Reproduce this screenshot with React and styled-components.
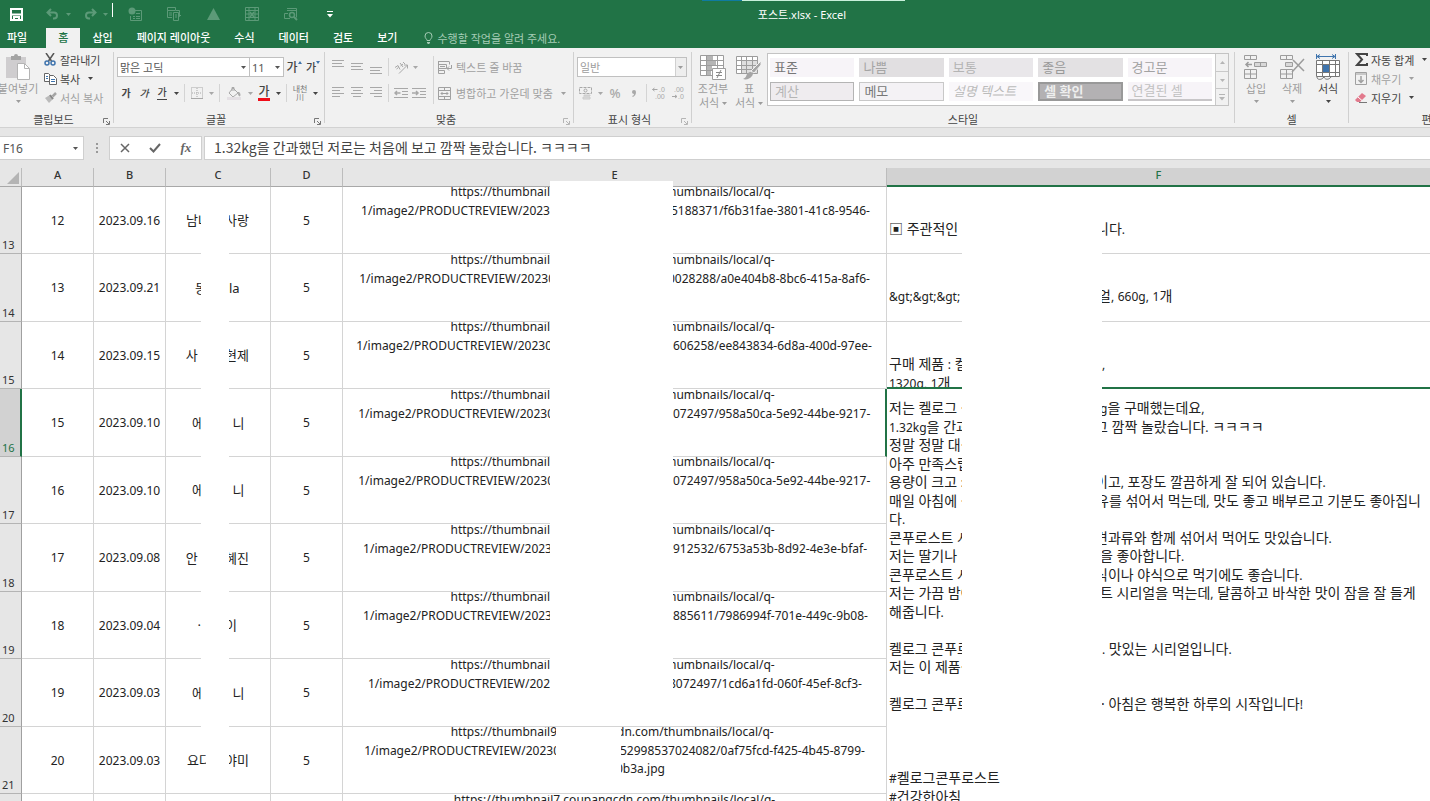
import React, { useState } from "react";
import styled, { createGlobalStyle, css } from "styled-components";

const GlobalStyle = createGlobalStyle`
  * {
    box-sizing: border-box;
  }
  body {
    margin: 0;
    background: #fff;
  }
  svg {
    flex: none;
  }
  button, input, select {
    font: inherit;
    color: inherit;
    margin: 0;
    padding: 0;
    border: none;
    background: none;
    border-radius: 0;
    outline: none;
  }
`;

const green = "#217346";

const Page = styled.div`
  height: 100vh;
  display: flex;
  flex-direction: column;
  overflow: hidden;
  font-family: "Noto Sans", "Noto Sans CJK KR", sans-serif;
  font-size: 11px;
  color: #444;
`;

/* ---------- title bar ---------- */
const TitleBar = styled.header`
  position: relative;
  height: 28px;
  flex: none;
  display: flex;
  align-items: center;
  background: ${green};
  color: #fff;
`;
const Strip = styled.div`
  position: absolute;
  top: 0;
  left: 702px;
  width: 203px;
  height: 1px;
  background: linear-gradient(90deg, #0f7ba0 40px, #c9f0dc 40px);
`;
const QuickAccess = styled.div`
  width: 340px;
  flex: none;
  height: 26px;
  display: flex;
  align-items: center;
  padding-left: 3px;
`;
const QuickGroup = styled.div`
  flex: none;
  display: flex;
  align-items: center;
  gap: ${(props) => props.$gap || 0}px;
  margin-left: ${(props) => props.$before}px;
`;
const QuickButton = styled.button`
  width: ${(props) => props.$width || 20}px;
  flex: none;
  height: 24px;
  display: flex;
  align-items: center;
  justify-content: center;
  color: ${(props) => (props.$on ? "#fff" : "#5c9a78")};
`;
const QuickLine = styled.span`
  width: 1px;
  flex: none;
  height: 14px;
  margin-left: 3px;
  margin-bottom: 8px;
  background: #fff;
`;
const DocTitle = styled.h1`
  flex: 1;
  margin: 0;
  padding-right: 166px;
  text-align: center;
  font-size: 11px;
  font-weight: 400;
`;

/* ---------- tabs ---------- */
const Tabs = styled.nav`
  height: 20px;
  flex: none;
  display: flex;
  background: ${green};
`;
const Tab = styled.button`
  padding: 0 12px;
  color: #fff;
  font-weight: 500;
  line-height: 20px;
  white-space: nowrap;
  ${(props) =>
    props.$file &&
    css`
      padding: 0 19px 0 7px;
    `}
  ${(props) =>
    props.$active &&
    css`
      background: #f1f1f1;
      color: ${green};
    `}
`;
const TellMe = styled.button`
  display: flex;
  align-items: center;
  gap: 4px;
  padding-left: 15px;
  color: #a6cdb6;
  white-space: nowrap;
`;

/* ---------- ribbon ---------- */
const Ribbon = styled.section`
  height: 80px;
  flex: none;
  display: flex;
  background: #f1f1f1;
  border-bottom: 1px solid #d2d2d2;
  overflow: hidden;
`;
const Group = styled.div`
  position: relative;
  flex: none;
  width: ${(props) => props.$width}px;
  display: flex;
  flex-direction: column;
  &::after {
    content: "";
    position: absolute;
    right: 0;
    top: 4px;
    bottom: 4px;
    width: 1px;
    background: #d0d0d0;
  }
`;
const GroupBody = styled.div`
  height: 62px;
  display: flex;
  padding-left: ${(props) => (props.$flush ? 0 : 3)}px;
`;
const GroupFooter = styled.div`
  height: 17px;
  display: flex;
  align-items: center;
  padding-right: 1px;
  span {
    flex: 1;
    text-align: center;
    padding-left: ${(props) => (props.$launcher ? 4 : 0)}px;
  }
`;
const Launcher = styled.button`
  width: 10px;
  height: 12px;
  display: flex;
  align-items: flex-end;
  color: ${(props) => (props.$dim ? "#b5b5b5" : "#777")};
`;
const Stack = styled.div`
  flex: none;
  display: flex;
  flex-direction: column;
  padding-top: ${(props) => (props.$small ? 2 : 6)}px;
  padding-left: ${(props) => props.$indent || 0}px;
  width: ${(props) => (props.$width ? `${props.$width}px` : "auto")};
`;
const ToolRow = styled.div`
  display: flex;
  align-items: center;
  height: 26px;
`;
const ToolButton = styled.button`
  width: ${(props) => props.$width || 18}px;
  height: 22px;
  display: flex;
  align-items: center;
  justify-content: center;
  color: ${(props) => (props.$dim ? "#a8a8a8" : "#444")};
`;
const Glyph = styled.span`
  font-size: ${(props) => props.$size || 11}px;
  font-weight: ${(props) => (props.$bold ? 700 : 500)};
  font-style: ${(props) => (props.$italic ? "italic" : "normal")};
  line-height: 13px;
  border-bottom: ${(props) => props.$line || "none"};
`;
const RubyMark = styled.span`
  font-size: 8px;
  line-height: 8px;
  text-align: center;
  color: #777;
`;
const LabelButton = styled.button`
  display: flex;
  align-items: center;
  gap: 4px;
  height: ${(props) => (props.$tall ? 26 : 19)}px;
  white-space: nowrap;
  color: ${(props) => (props.$dim ? "#a0a0a0" : "#444")};
  & > svg:last-child {
    margin-left: 4px;
  }
`;
const IconSlot = styled.span`
  width: ${(props) => props.$width || 12}px;
  display: flex;
  justify-content: center;
`;
const BigButton = styled.button`
  width: 36px;
  flex: none;
  display: flex;
  flex-direction: column;
  align-items: center;
  padding-top: 6px;
  line-height: 14px;
  white-space: nowrap;
  color: ${(props) => (props.$dim ? "#9c9c9c" : "#444")};
  & > svg:first-child {
    margin-bottom: 2px;
  }
  & > svg:last-child {
    margin-top: 4px;
  }
`;
const BigLabel = styled.span`
  display: flex;
  align-items: center;
  gap: 3px;
  height: 14px;
`;
const Divider = styled.span`
  width: 1px;
  flex: none;
  height: ${(props) => (props.$tall ? 48 : 18)}px;
  margin: ${(props) => (props.$tall ? "8px 4px 0 1px" : "0 3px")};
  background: #d4d4d4;
`;
const Picker = styled.label`
  position: relative;
  flex: none;
  width: ${(props) => props.$width}px;
  height: 20px;
  border: 1px solid #c0c0c0;
  border-left-width: ${(props) => (props.$joined ? 0 : 1)}px;
  background: #fff;
  color: ${(props) => (props.$dim ? "#9c9c9c" : "#555")};
  select {
    display: block;
    appearance: none;
    width: 100%;
    height: 18px;
    padding-left: 2px;
  }
  svg {
    position: absolute;
    right: 3px;
    top: 8px;
    pointer-events: none;
  }
  ${(props) =>
    props.$dim &&
    css`
      background: linear-gradient(270deg, #eee 10px, #d0d0d0 10px, #d0d0d0 11px, #fff 11px);
    `}
`;

/* ---------- style gallery ---------- */
const Gallery = styled.div`
  flex: 1;
  height: 53px;
  margin: 5px 6px 0 0;
  display: flex;
  border: 1px solid #c3c3c3;
  background: #fff;
`;
const GalleryGrid = styled.div`
  flex: 1;
  display: grid;
  grid-template-columns: repeat(5, 1fr);
  grid-auto-rows: 19px;
  gap: 5px;
  padding: 4px 3px 4px 2px;
`;
const looks = {
  plain: "background: #f7f4f8; color: #777;",
  shade: "background: #e1dfe1; color: #a5a5a5;",
  soft: "background: #e9e7ea; color: #b4b4b4;",
  good: "background: #e3e1e3; color: #999;",
  warn: "background: #f7f4f8; color: #a2a2a2;",
  calc: "background: #efecef; color: #b5b5b5; border: 1px solid #b4b4b4;",
  memo: "background: #f4f2f5; color: #777; border: 1px solid #c8c8c8;",
  note: "background: #f9f7fa; color: #bbb; font-style: italic;",
  check:
    "background: #b3b1b3; color: #eee; border: 2px solid #999; font-weight: 700;",
  link: "background: #f7f4f8; color: #c2c2c2; border-bottom: 2px solid #c8c6c8;",
};
const StyleButton = styled.button`
  && {
    display: flex;
    align-items: center;
    padding-left: 4px;
    font-size: 13px;
    line-height: 15px;
    white-space: nowrap;
    ${(props) => looks[props.$look]}
  }
`;
const GalleryScroll = styled.div`
  width: 13px;
  display: grid;
  grid-template-rows: repeat(3, 1fr);
  background: #f1f1f1;
  border-left: 1px solid #c9c9c9;
  button {
    display: flex;
    align-items: center;
    justify-content: center;
    color: #b5b5b5;
  }
  button + button {
    border-top: 1px solid #c9c9c9;
  }
`;

/* ---------- formula bar ---------- */
const FormulaBar = styled.div`
  height: 40px;
  flex: none;
  display: flex;
  padding: 8px 0;
  background: #e6e6e6;
  color: #555;
`;
const NameBox = styled.label`
  width: 84px;
  display: flex;
  align-items: center;
  justify-content: space-between;
  padding: 0 5px 0 3px;
  background: #fff;
  border: 1px solid #cfcfcf;
  border-left: none;
  input {
    width: 60px;
    font-size: 12px;
  }
`;
const Grip = styled.span`
  width: 25px;
  display: flex;
  align-items: center;
  justify-content: center;
  color: #999;
`;
const FormulaActions = styled.div`
  width: 93px;
  display: flex;
  align-items: center;
  background: #fff;
  border: 1px solid #cfcfcf;
  button {
    flex: 1;
    display: flex;
    justify-content: center;
    color: #666;
  }
`;
const FunctionMark = styled.i`
  font-family: "Liberation Serif", serif;
  font-weight: 700;
  font-size: 13px;
  line-height: 16px;
`;
const FormulaInput = styled.input`
  && {
    flex: 1;
    margin-left: 2px;
    padding: 0 0 2px 9px;
    background: #fff;
    border: 1px solid #cfcfcf;
    border-right: none;
    font-size: 14px;
    font-family: "Noto Sans CJK KR", sans-serif;
    color: #444;
  }
`;

/* ---------- sheet ---------- */
const Sheet = styled.main`
  position: relative;
  flex: 1;
  min-height: 0;
  overflow: hidden;
  background: #fff;
`;
const Grid = styled.table`
  width: 100%;
  table-layout: fixed;
  border-collapse: separate;
  border-spacing: 0;
  font-size: 12px;
  color: #222;
`;
const Col = styled.col`
  width: ${(props) => (props.$width ? `${props.$width}px` : "auto")};
`;
const ColHead = styled.th`
  height: 19px;
  padding: 0;
  font-size: 11px;
  font-weight: 500;
  line-height: 14px;
  vertical-align: top;
  background: ${(props) => (props.$selected ? "#d2d2d2" : "#e6e6e6")};
  color: ${(props) => (props.$selected ? green : "#333")};
  border-right: ${(props) => (props.$selected ? "none" : "1px solid #bcbcbc")};
  border-bottom: ${(props) =>
    props.$selected ? `2px solid ${green}` : "1px solid #a8a8a8"};
  svg {
    display: block;
    margin: 4px 0 0 7px;
  }
`;
const RowHead = styled.th`
  padding: 0 0 0 2px;
  text-align: left;
  vertical-align: bottom;
  font-size: 11px;
  font-weight: 400;
  line-height: 16px;
  background: ${(props) => (props.$selected ? "#d2d2d2" : "#e6e6e6")};
  color: ${(props) => (props.$selected ? green : "#333")};
  border-right: ${(props) =>
    props.$selected ? `2px solid ${green}` : "1px solid #a0a0a0"};
  border-bottom: 1px solid #b4b4b4;
`;
const Row = styled.tr`
  height: 68px;
  &:nth-child(odd) {
    height: 67px;
  }
`;
const Cell = styled.td`
  padding: 0;
  text-align: center;
  border-right: ${(props) =>
    props.$edge ? `2px solid ${green}` : "1px solid #d4d4d4"};
  border-bottom: 1px solid #d4d4d4;
`;
const NameCell = styled(Cell)`
  font-size: 13px;
`;
const NoteCell = styled.td`
  padding: 0;
  vertical-align: top;
  font-size: 14px;
  border-bottom: ${(props) =>
    props.$edge ? `2px solid ${green}` : "1px solid #d4d4d4"};
`;
const ActiveCell = styled(NoteCell)`
  padding-top: 10px;
`;
const NoteBody = styled.div`
  height: 65px;
  padding-top: 33px;
  overflow: hidden;
`;
const Latin = styled.span`
  font-size: 12px;
`;
const UrlBody = styled.div`
  height: 66px;
  display: flex;
  flex-direction: column;
  justify-content: center;
  overflow: hidden;
`;
/* 18 and 19px lines in turn, as the sheet is zoomed out a little */
const Line = styled.div`
  flex: none;
  display: grid;
  grid-template-columns: ${(props) => props.$columns};
  height: 18px;
  line-height: 18px;
  white-space: pre;
  &:nth-child(even) {
    height: 19px;
    line-height: 19px;
  }
`;
const WholeLine = styled(Line)`
  display: block;
`;
const Before = styled.span`
  display: flex;
  overflow: hidden;
  justify-content: flex-end;
  & > span {
    flex: none;
    margin-right: ${(props) => -(props.$cut || 0)}px;
  }
`;
const Lead = styled.span`
  overflow: hidden;
  padding-left: 2px;
`;
const After = styled.span`
  display: flex;
  grid-column: 3;
  overflow: hidden;
  & > span {
    flex: none;
    margin-left: ${(props) => -(props.$cut || 0)}px;
  }
`;
const Cover = styled.div`
  position: absolute;
  background: #fff;
`;
const NameCover = styled(Cover)`
  left: 201px;
  top: 19px;
  width: 28px;
  height: 541px;
`;
const UrlCover = styled(Cover)`
  left: 550px;
  top: 13px;
  width: 123px;
  height: 545px;
`;
const NoteCover = styled(Cover)`
  left: 962px;
  top: 19px;
  width: 140px;
  height: 204px;
`;

/* ---------- icons ---------- */
const Svg = ({ w, h, sw = 1, children }) => (
  <svg
    width={w}
    height={h}
    viewBox={`0 0 ${w} ${h}`}
    fill="none"
    stroke="currentColor"
    strokeWidth={sw}
    aria-hidden="true"
  >
    {children}
  </svg>
);
const Caret = () => (
  <Svg w={5} h={3}>
    <path d="M0 0h5L2.5 3z" fill="currentColor" stroke="none" />
  </Svg>
);
const CaretUp = () => (
  <Svg w={5} h={3}>
    <path d="M0 3h5L2.5 0z" fill="currentColor" stroke="none" />
  </Svg>
);
const MoreCaret = () => (
  <Svg w={6} h={7}>
    <path d="M0 .5h6" />
    <path d="M0 3h6L3 6.500z" fill="currentColor" stroke="none" />
  </Svg>
);
const SaveIcon = () => (
  <Svg w={13} h={13} sw={2}>
    <path d="M1 1h11v11H1z" />
    <path d="M2 6.500h9M4 12V9h5v3" />
  </Svg>
);
const UndoIcon = () => (
  <Svg w={13} h={12} sw={2}>
    <path d="M5 1L1.500 4.500 5 8M2 4.500h6a3 3 0 0 1 0 6H7" />
  </Svg>
);
const RedoIcon = () => (
  <Svg w={13} h={12} sw={2}>
    <path d="M8 1l3.500 3.500L8 8M11 4.500H5a3 3 0 0 0 0 6h1" />
  </Svg>
);
const FormIcon = () => (
  <Svg w={14} h={14}>
    <path d="M6 3.500h7.500v10h-11V9M5 9.500h2m1 0h4M5 11.500h2m1 0h4M8 6.500h4" />
    <circle cx="4" cy="4" r="3.500" fill="currentColor" stroke="none" />
  </Svg>
);
const SheetsIcon = () => (
  <Svg w={14} h={14}>
    <path d="M.5.5h8v3h-8zM.5 3.500v7H5M2 6h3M2 8h3M6.500 5.500h5v8h-5zM8 8h2M8 10h2M9 3.500h3.500V9M11 8l1.500 1.500L14 8" />
  </Svg>
);
const TriangleIcon = () => (
  <Svg w={13} h={12}>
    <path d="M6.500 0L13 12H0z" fill="currentColor" stroke="none" />
  </Svg>
);
const TableIcon = () => (
  <Svg w={14} h={14}>
    <path d="M.5.5h13v13H.5zM.5 3.500h13M.5 7h13M.5 10.500h13M4 .5v13M10 .5v13" />
    <path d="M5 5l4 5M9 5l-4 5" strokeWidth="1.500" />
  </Svg>
);
const PreviewIcon = () => (
  <Svg w={14} h={14}>
    <path d="M3 1.500h9.500v9M3 3.500h9.500M.5 6.500v5H6M.5 6.500H4" />
    <circle cx="8" cy="8" r="2.500" strokeWidth="1.500" />
    <path d="M10 10l3 3" strokeWidth="2" />
  </Svg>
);
const BulbIcon = () => (
  <Svg w={9} h={12}>
    <path d="M3 8.500C3 7 1 6.500 1 4a3.500 3.500 0 0 1 7 0c0 2.500-2 3-2 4.500zM3 10.500h3M3.500 11.500h2" />
  </Svg>
);
const PasteIcon = () => (
  <Svg w={26} h={26}>
    <path d="M1 3h20v7h-7v14H1z" fill="#cfcdcf" stroke="none" />
    <path d="M6 2h3a2 2 0 0 1 4 0h3v4H6z" fill="#a3a3a3" stroke="none" />
    <path d="M12.500 9.500h7l5 5v11h-12z" fill="#fff" stroke="#b4b4b4" />
    <path d="M19.500 9.500v5h5" stroke="#b4b4b4" />
  </Svg>
);
const CutIcon = () => (
  <Svg w={12} h={13}>
    <path d="M2 0l5.500 8M10 0L4.500 8" stroke="#555" strokeWidth="1.500" />
    <circle cx="3" cy="10" r="2" stroke="#3f74ad" strokeWidth="1.500" />
    <circle cx="9" cy="10" r="2" stroke="#3f74ad" strokeWidth="1.500" />
  </Svg>
);
const CopyIcon = () => (
  <Svg w={13} h={13}>
    <path d="M.5 1.500h4l2 2v6h-6z" fill="#fff" stroke="#666" />
    <path d="M2 4.500h2M2 6.500h2" stroke="#3f74ad" />
    <path d="M5.500 3.500h4l3 3v6h-7z" fill="#fff" stroke="#666" />
    <path d="M7 7.500h4M7 9.500h4" stroke="#3f74ad" />
  </Svg>
);
const BrushIcon = () => (
  <Svg w={13} h={12}>
    <path d="M1 6l5-3 3 4-4 4z" fill="#bbb" stroke="none" />
    <path d="M6 3l3 4" stroke="#888" strokeWidth="2" />
    <path d="M8.500 4.500L12 1" stroke="#a5a5a5" strokeWidth="2.500" />
  </Svg>
);
const LauncherIcon = () => (
  <Svg w={7} h={7}>
    <path d="M.5 5V.5H5M3 3l3 3M6.500 3v3.500H3" />
  </Svg>
);
const GrowMark = ({ down }) => (
  <Svg w={4} h={12}>
    <path
      d={down ? "M0 0h4L2 3z" : "M0 3h4L2 0z"}
      fill="#3f74ad"
      stroke="none"
    />
  </Svg>
);
const BorderIcon = () => (
  <Svg w={12} h={12}>
    <path d="M.5.5h11v11H.5zM6 1v10M1 6h10" strokeDasharray="1 1" />
    <path d="M0 11.500h12" />
  </Svg>
);
const FillIcon = () => (
  <Svg w={14} h={14}>
    <path d="M6 2l5 5-5 4-4-4zM5 5V1.500h2V5" />
    <path d="M11.500 6c2 1.500 1.500 4 1 4s-1.500-2-1-4z" fill="currentColor" />
    <path d="M0 12.500h14" stroke="#e4e0e4" strokeWidth="3" />
  </Svg>
);
const LinesIcon = ({ widths, top = 1, align }) => (
  <Svg w={12} h={15}>
    {widths.map((w, i) => {
      const x = align === "right" ? 12 - w : align === "center" ? (12 - w) / 2 : 0;
      return <path key={i} d={`M${x} ${top + i * 3 + 0.5}h${w}`} />;
    })}
  </Svg>
);
const OrientIcon = () => (
  <Svg w={15} h={13}>
    <path d="M5 12.500L13.500 4M10 4h3.500v3.500" />
    <path d="M1 6.500l3-2 2 4M2.500 8l2-1.500M6 2l3 4M6.500 5l2.500-2M9 1l2 2" />
  </Svg>
);
const IndentIcon = ({ out }) => (
  <Svg w={14} h={11}>
    <path d="M0 .5h14M8 3.500h6M8 6.500h6M0 9.500h14" />
    <path
      d={out ? "M6.500 5H1M3 3L1 5l2 2" : "M0 5h6M4 3l2 2-2 2"}
      strokeWidth="1.500"
    />
  </Svg>
);
const WrapIcon = () => (
  <Svg w={14} h={13}>
    <path d="M0 .5h11M.5 1v11.500M11.500.5v3M.5 3.500h8v4h-8M2 5.500h5M.5 9.500h6v3h-6M13.500 4v3.500H9M11 5.500l-2 2 2 2" />
  </Svg>
);
const MergeIcon = () => (
  <Svg w={14} h={13}>
    <path d="M.5.5h12v12H.5zM.5 3.500h12M.5 9.500h12M6.500.5v3M6.500 9.500v3M3 6.500h7M4.500 5L3 6.500 4.500 8M8.500 5L10 6.500 8.500 8" />
  </Svg>
);
const MoneyIcon = () => (
  <Svg w={14} h={13}>
    <path d="M.5.5h12v6H.5z" strokeDasharray="3 1" />
    <circle cx="6.500" cy="3.500" r="1.500" />
    <path d="M5 8h6v1H5zM4 10h7v2H4z" fill="#ddd" stroke="#ccc" />
  </Svg>
);
const CommaIcon = () => (
  <Svg w={5} h={7}>
    <path
      d="M0 2a2 2 0 0 1 4 0c0 2-1 4-3 5l-1-1c1 0 2-1 2-2-1 0-2-1-2-2z"
      fill="currentColor"
      stroke="none"
    />
  </Svg>
);
const DecimalIcon = ({ less }) => (
  <svg width="14" height="14" viewBox="0 0 14 14" aria-hidden="true">
    <g fill="currentColor" fontSize="7" fontFamily="Liberation Sans, sans-serif">
      <text x={less ? 3 : 7} y="6">
        {less ? ".00" : ".0"}
      </text>
      <text x={less ? 7 : 3} y="13">
        {less ? ".0" : ".00"}
      </text>
    </g>
    <path
      d={
        less
          ? "M1 10.500h5M4 9l2 1.500L4 12"
          : "M5.500 3.500H.5M2.500 2L.5 3.500l2 1.500"
      }
      fill="none"
      stroke="currentColor"
    />
  </svg>
);
const CondIcon = () => (
  <Svg w={26} h={26}>
    <path d="M.5 1.500h23v20H.5z" fill="#fff" />
    <path
      d="M7 2h6v5H7zM7 7h9v5H7zM7 12h5v5H7zM7 17h4v4H7z"
      fill="#b5b5b5"
      stroke="none"
    />
    <path d="M.5 6.500h23M.5 11.500h23M.5 16.500h23M6.500 1.500v20M17.500 1.500v20" />
    <path d="M12.500 14.500h13v11h-13z" fill="#fff" />
    <path d="M16 18.500h6M16 21.500h6M21 16l-4 8" stroke="#888" />
  </Svg>
);
const TableFormatIcon = () => (
  <Svg w={26} h={26}>
    <path d="M.5 2.500h21v17H.5z" fill="#fff" />
    <path d="M6 7h15v12H6z" fill="#dedede" stroke="none" />
    <path d="M.5 6.500h21M.5 11.500h21M.5 15.500h21M5.500 2.500v17M10.500 2.500v17M16.500 2.500v17" />
    <path d="M25 7v4l-7 8-3-2z" fill="#a5a5a5" stroke="#f1f1f1" />
    <path
      d="M14 18c2 0 4 2 2 4-2 3-6 4-9 3 3-1 3-3 4-5 1-1 2-2 3-2z"
      fill="#a5a5a5"
      stroke="none"
    />
  </Svg>
);
const InsertIcon = () => (
  <Svg w={26} h={26}>
    <path d="M1.500 1.500h12v4h-12zM7.500 1.500v4M1.500 15.500h12v9h-12zM7.500 15.500v9M1.500 20h12" />
    <path d="M11.500 8.500h12v4h-12zM17.500 8.500v4" fill="#d8d8d8" />
    <path d="M9 10.500H3M5.500 8L3 10.500 5.500 13" strokeWidth="1.500" />
  </Svg>
);
const DeleteIcon = () => (
  <Svg w={26} h={26}>
    <path d="M1.500 1.500h12v4h-12zM7.500 1.500v4M1.500 15.500h12v9h-12zM7.500 15.500v9M1.500 20h12" />
    <path d="M6.500 8.500h7v4h-7z" fill="#d8d8d8" />
    <path d="M14 6l11 11M25 5L13 18" strokeWidth="1.500" />
  </Svg>
);
const FormatIcon = () => (
  <Svg w={26} h={26}>
    <path
      d="M1.500 0v5M20.500 0v5M2 2.500h18M5 .5l-3 2 3 2M17 .5l3 2-3 2"
      stroke="#3f74ad"
    />
    <path
      d="M1.500 6.500h23v16h-23zM1.500 10.500h23M1.500 18.500h23M7.500 6.500v16M14.500 6.500v16M20.500 6.500v16"
      fill="#fff"
      stroke="#777"
    />
    <path d="M8 11h6v7H8z" fill="#3f74ad" stroke="none" />
    <path d="M2 23c0 3 4 3 6 1l1-1c1 3 5 3 7 0" stroke="#777" />
  </Svg>
);
const SumIcon = () => (
  <Svg w={13} h={13} sw={2}>
    <path d="M12 3V1H2l5 5.500L2 12h10v-2" />
  </Svg>
);
const DownIcon = () => (
  <Svg w={12} h={13}>
    <path d="M.5.5h11v12H.5zM.5 2h11" />
    <path d="M6 4v6M3.500 8L6 10.500 8.500 8" strokeWidth="1.500" />
  </Svg>
);
const EraserIcon = () => (
  <Svg w={12} h={12}>
    <path d="M7 1l4 3-6 6H2L0 8z" fill="#e2798c" stroke="none" />
    <path d="M3 5l4 3.500" stroke="#fff" />
    <path d="M4 10.500h8" stroke="#777" />
  </Svg>
);
const GripIcon = () => (
  <Svg w={2} h={10}>
    <path d="M1 0v10" strokeWidth="2" strokeDasharray="2 2" />
  </Svg>
);
const CancelIcon = () => (
  <Svg w={10} h={10}>
    <path d="M1 1l8 8M9 1L1 9" strokeWidth="1.500" />
  </Svg>
);
const CheckIcon = () => (
  <Svg w={12} h={10} sw={2}>
    <path d="M1 5l3.500 3.500L11 1" />
  </Svg>
);
const CornerIcon = () => (
  <Svg w={12} h={12}>
    <path d="M12 0v12H0z" fill="#b4b4b4" stroke="none" />
  </Svg>
);

/* ---------- data ---------- */
const tabs = [
  "파일",
  "홈",
  "삽입",
  "페이지 레이아웃",
  "수식",
  "데이터",
  "검토",
  "보기",
];

const styleCells = [
  ["표준", "plain"],
  ["나쁨", "shade"],
  ["보통", "soft"],
  ["좋음", "good"],
  ["경고문", "warn"],
  ["계산", "calc"],
  ["메모", "memo"],
  ["설명 텍스트", "note"],
  ["셀 확인", "check"],
  ["연결된 셀", "link"],
];

const columns = ["A", "B", "C", "D", "E", "F"];
const columnWidths = [22, 72, 72, 105, 72, 544, null];
const ACTIVE = 16;

const PATH = "1/image2/PRODUCTREVIEW/";
// name and url: [before, cut, after, cut], the cuts in pixels
const rows = [
  {
    n: 13,
    id: 12,
    date: "2023.09.16",
    name: ["남나", 9, "사랑", 4],
    url: ["2023", 0, "5188371/f6b31fae-3801-41c8-9546-", 2],
  },
  {
    n: 14,
    id: 13,
    date: "2023.09.21",
    name: ["동", 6, "la", 0],
    url: ["20230", 5, "0028288/a0e404b8-8bc6-415a-8af6-", 5],
  },
  {
    n: 15,
    id: 14,
    date: "2023.09.15",
    name: ["사 ", 0, "현제", 4],
    url: ["20230", 2, "606258/ee843834-6d8a-400d-97ee-", 0],
  },
  {
    n: 16,
    id: 15,
    date: "2023.09.10",
    name: ["에", 3, " 니", 0],
    url: ["20230", 4, "072497/958a50ca-5e92-44be-9217-", 0],
  },
  {
    n: 17,
    id: 16,
    date: "2023.09.10",
    name: ["에", 3, " 니", 0],
    url: ["20230", 4, "072497/958a50ca-5e92-44be-9217-", 0],
  },
  {
    n: 18,
    id: 17,
    date: "2023.09.08",
    name: ["안 ", 0, "혜진", 4],
    url: ["2023", 2, "912532/6753a53b-8d92-4e3e-bfaf-", 0],
  },
  {
    n: 19,
    id: 18,
    date: "2023.09.04",
    name: ["·", 0, "이", 4],
    url: ["2023", 2, "885611/7986994f-701e-449c-9b08-", 0],
  },
  {
    n: 20,
    id: 19,
    date: "2023.09.03",
    name: ["에", 3, " 니", 0],
    url: ["202", 0, "8072497/1cd6a1fd-060f-45ef-8cf3-", 4],
  },
  {
    n: 21,
    id: 20,
    date: "2023.09.03",
    name: ["요다", 5, "야미", 4],
    url: ["20230", 4, "52998537024082/0af75fcd-f425-4b45-8799-", 1],
  },
];

// notes: [before, after, cut]
const notes = {
  13: [["▣ 주관적인 ·", "니다.", 6]],
  14: [["&gt;&gt;&gt;", "얼, 660g, 1개", 4]],
  15: [["구매 제품 : 켈", ",", 0], ["1320g, 1개"]],
};

const review = [
  ["저는 켈로그 ·", "g을 구매했는데요,", 2],
  ["1.32kg을 간과", "고 깜짝 놀랐습니다. ㅋㅋㅋㅋ", 7],
  ["정말 정말 대·"],
  ["아주 만족스럽"],
  ["용량이 크고 :", "이고, 포장도 깔끔하게 잘 되어 있습니다.", 7],
  ["매일 아침에 ·", "유를 섞어서 먹는데, 맛도 좋고 배부르고 기분도 좋아집니", 6],
  ["다."],
  ["콘푸로스트 시", "견과류와 함께 섞어서 먹어도 맛있습니다.", 7],
  ["저는 딸기나 ㅂ", "을 좋아합니다.", 2],
  ["콘푸로스트 시", "식이나 야식으로 먹기에도 좋습니다.", 7],
  ["저는 가끔 밤에", "트 시리얼을 먹는데, 달콤하고 바삭한 맛이 잠을 잘 들게", 2],
  ["해줍니다."],
  [""],
  ["켈로그 콘푸로", ". 맛있는 시리얼입니다.", 0],
  ["저는 이 제품·"],
  [""],
  ["켈로그 콘푸로", "· 아침은 행복한 하루의 시작입니다!", 1],
  [""],
  [""],
  [""],
  ["#켈로그콘푸로스트"],
  ["#건강한아침"],
];

/* ---------- parts ---------- */
const Split = ({ columns, parts: [before, beforeCut, after, afterCut] }) => (
  <Line $columns={columns}>
    <Before $cut={beforeCut}>
      <span>{before}</span>
    </Before>
    {after && (
      <After $cut={afterCut}>
        <span>{after}</span>
      </After>
    )}
  </Line>
);

// latin runs are set smaller than the hangul around them
const mixed = (text) =>
  text
    .split(/([!-~]+)/)
    .map((run, idx) => (idx % 2 ? <Latin key={idx}>{run}</Latin> : run));

const NoteLine = ({ line: [before, after, cut] }) => (
  <Line $columns={before[0] === "#" ? "1fr" : "75px 140px 1fr"}>
    <Lead>{mixed(before)}</Lead>
    {after && (
      <After $cut={cut}>
        <span>{mixed(after)}</span>
      </After>
    )}
  </Line>
);

const UrlLines = ({ row }) => {
  const last = row.n === 21;
  const grid = last ? "213px 65px 1fr" : "207px 123px 1fr";
  const [before, ...rest] = row.url;
  const host = last
    ? ["https://thumbnail9", 1, "dn.com/thumbnails/local/q-", 4]
    : ["https://thumbnail", 0, "humbnails/local/q-", 4];
  return (
    <UrlBody>
      <Split columns={grid} parts={host} />
      <Split columns={grid} parts={[PATH + before, ...rest]} />
      <Split columns={grid} parts={["", 0, last && "0b3a.jpg", 5]} />
      <Split columns={grid} parts={[""]} />
    </UrlBody>
  );
};

const RibbonGroup = ({ width, title, launcher, dim, flush, children }) => (
  <Group $width={width}>
    <GroupBody $flush={flush}>{children}</GroupBody>
    <GroupFooter $launcher={launcher}>
      <span>{title}</span>
      {launcher && (
        <Launcher $dim={dim} aria-label={title}>
          <LauncherIcon />
        </Launcher>
      )}
    </GroupFooter>
  </Group>
);

const Tool = ({ label, width, dim, children }) => (
  <ToolButton $width={width} $dim={dim} aria-label={label}>
    {children}
  </ToolButton>
);

const DropTool = ({ label, dim }) => (
  <Tool label={label} width={10} dim={dim}>
    <Caret />
  </Tool>
);

const FontGroup = () => (
  <RibbonGroup width={211} title="글꼴" launcher>
    <Stack>
      <ToolRow>
        <Picker $width={133}>
          <select aria-label="글꼴">
            <option>맑은 고딕</option>
          </select>
          <Caret />
        </Picker>
        <Picker $width={34} $joined>
          <select aria-label="글꼴 크기">
            <option>11</option>
          </select>
          <Caret />
        </Picker>
        <Tool width={20} label="크게">
          <Glyph $size={12}>가</Glyph>
          <GrowMark />
        </Tool>
        <Tool label="작게">
          <Glyph>가</Glyph>
          <GrowMark down />
        </Tool>
      </ToolRow>
      <ToolRow>
        <Tool label="굵게">
          <Glyph $size={10} $bold>가</Glyph>
        </Tool>
        <Tool label="기울임꼴">
          <Glyph $size={10} $italic>가</Glyph>
        </Tool>
        <Tool label="밑줄">
          <Glyph $size={10} $line="1px solid #444">가</Glyph>
        </Tool>
        <DropTool label="밑줄 종류" />
        <Divider />
        <Tool dim label="테두리">
          <BorderIcon />
        </Tool>
        <DropTool dim label="테두리 종류" />
        <Divider />
        <Tool dim width={22} label="채우기 색">
          <FillIcon />
        </Tool>
        <DropTool dim label="채우기 색 목록" />
        <Tool label="글꼴 색">
          <Glyph $size={12} $line="3px solid #f00c18">가</Glyph>
        </Tool>
        <DropTool label="글꼴 색 목록" />
        <Divider />
        <Tool width={20} label="윗주">
          <RubyMark>내천 川</RubyMark>
        </Tool>
        <DropTool label="윗주 목록" />
      </ToolRow>
    </Stack>
  </RibbonGroup>
);

const AlignGroup = () => (
  <RibbonGroup width={249} title="맞춤" launcher dim>
    <Stack $width={104}>
      <ToolRow>
        <Tool dim width={19} label="위쪽 맞춤">
          <LinesIcon widths={[12, 10, 12]} top={0} />
        </Tool>
        <Tool dim width={19} label="가운데 맞춤">
          <LinesIcon widths={[12, 10, 12]} top={3} />
        </Tool>
        <Tool dim width={19} label="아래쪽 맞춤">
          <LinesIcon widths={[12, 10, 12]} top={7} />
        </Tool>
        <Divider />
        <Tool dim label="방향">
          <OrientIcon />
        </Tool>
        <DropTool dim label="방향 목록" />
      </ToolRow>
      <ToolRow>
        <Tool dim width={19} label="왼쪽 맞춤">
          <LinesIcon widths={[12, 8, 12, 8]} />
        </Tool>
        <Tool dim width={19} label="가운데">
          <LinesIcon widths={[12, 8, 12, 8]} align="center" />
        </Tool>
        <Tool dim width={19} label="오른쪽 맞춤">
          <LinesIcon widths={[12, 8, 12, 8]} align="right" />
        </Tool>
        <Divider />
        <Tool dim label="내어쓰기">
          <IndentIcon out />
        </Tool>
        <Tool dim label="들여쓰기">
          <IndentIcon />
        </Tool>
      </ToolRow>
    </Stack>
    <Divider $tall />
    <Stack>
      <LabelButton $tall $dim>
        <IconSlot $width={14}>
          <WrapIcon />
        </IconSlot>
        텍스트 줄 바꿈
      </LabelButton>
      <LabelButton $tall $dim>
        <IconSlot $width={14}>
          <MergeIcon />
        </IconSlot>
        병합하고 가운데 맞춤
        <Caret />
      </LabelButton>
    </Stack>
  </RibbonGroup>
);

const NumberGroup = () => (
  <RibbonGroup width={118} title="표시 형식" launcher dim>
    <Stack>
      <ToolRow>
        <Picker $width={110} $dim>
          <select aria-label="표시 형식">
            <option>일반</option>
          </select>
          <Caret />
        </Picker>
      </ToolRow>
      <ToolRow>
        <Tool dim label="회계 표시 형식">
          <MoneyIcon />
        </Tool>
        <DropTool dim label="통화 목록" />
        <Tool dim width={20} label="백분율">
          <Glyph $size={13}>%</Glyph>
        </Tool>
        <Tool dim label="쉼표">
          <CommaIcon />
        </Tool>
        <Divider />
        <Tool dim label="자릿수 늘림">
          <DecimalIcon />
        </Tool>
        <Tool dim width={20} label="자릿수 줄임">
          <DecimalIcon less />
        </Tool>
      </ToolRow>
    </Stack>
  </RibbonGroup>
);

const StyleGroup = () => (
  <RibbonGroup width={543} title="스타일">
    <BigButton $dim>
      <CondIcon />
      <BigLabel>조건부</BigLabel>
      <BigLabel>
        서식 <Caret />
      </BigLabel>
    </BigButton>
    <BigButton $dim>
      <TableFormatIcon />
      <BigLabel>표</BigLabel>
      <BigLabel>
        서식 <Caret />
      </BigLabel>
    </BigButton>
    <Gallery>
      <GalleryGrid>
        {styleCells.map(([name, look]) => (
          <StyleButton key={name} $look={look}>
            {name}
          </StyleButton>
        ))}
      </GalleryGrid>
      <GalleryScroll>
        <button aria-label="위로">
          <CaretUp />
        </button>
        <button aria-label="아래로">
          <Caret />
        </button>
        <button aria-label="자세히">
          <MoreCaret />
        </button>
      </GalleryScroll>
    </Gallery>
  </RibbonGroup>
);

const App = () => {
  const [tab, setTab] = useState("홈");
  const [formula, setFormula] = useState(
    "1.32kg을 간과했던 저로는 처음에 보고 깜짝 놀랐습니다. ㅋㅋㅋㅋ"
  );
  return (
    <Page>
      <GlobalStyle />
      <TitleBar>
        <Strip />
        <QuickAccess>
          <QuickButton $width={26} $on aria-label="저장">
            <SaveIcon />
          </QuickButton>
          <QuickGroup $before={12}>
            <QuickButton $width={22} aria-label="실행 취소">
              <UndoIcon />
            </QuickButton>
            <QuickButton $width={10} aria-label="실행 취소 목록">
              <Caret />
            </QuickButton>
          </QuickGroup>
          <QuickGroup $before={6}>
            <QuickButton $width={22} aria-label="다시 실행">
              <RedoIcon />
            </QuickButton>
            <QuickButton $width={8} aria-label="다시 실행 목록">
              <Caret />
            </QuickButton>
          </QuickGroup>
          <QuickLine />
          <QuickGroup $before={12} $gap={19}>
            <QuickButton aria-label="양식">
              <FormIcon />
            </QuickButton>
            <QuickButton aria-label="시트">
              <SheetsIcon />
            </QuickButton>
            <QuickButton aria-label="도형">
              <TriangleIcon />
            </QuickButton>
            <QuickButton aria-label="표">
              <TableIcon />
            </QuickButton>
            <QuickButton aria-label="미리 보기">
              <PreviewIcon />
            </QuickButton>
            <QuickButton $on aria-label="사용자 지정">
              <MoreCaret />
            </QuickButton>
          </QuickGroup>
        </QuickAccess>
        <DocTitle>포스트.xlsx - Excel</DocTitle>
      </TitleBar>
      <Tabs>
        {tabs.map((name) => (
          <Tab
            key={name}
            $file={name === "파일"}
            $active={name === tab}
            onClick={() => setTab(name)}
          >
            {name}
          </Tab>
        ))}
        <TellMe>
          <BulbIcon />
          수행할 작업을 알려 주세요.
        </TellMe>
      </Tabs>
      <Ribbon>
        <RibbonGroup width={114} title="클립보드" launcher flush>
          <BigButton $dim>
            <PasteIcon />
            <BigLabel>붙여넣기</BigLabel>
            <Caret />
          </BigButton>
          <Stack $small $indent={8}>
            <LabelButton>
              <IconSlot>
                <CutIcon />
              </IconSlot>
              잘라내기
            </LabelButton>
            <LabelButton>
              <IconSlot>
                <CopyIcon />
              </IconSlot>
              복사
              <Caret />
            </LabelButton>
            <LabelButton $dim>
              <IconSlot>
                <BrushIcon />
              </IconSlot>
              서식 복사
            </LabelButton>
          </Stack>
        </RibbonGroup>
        <FontGroup />
        <AlignGroup />
        <NumberGroup />
        <StyleGroup />
        <RibbonGroup width={114} title="셀">
          <BigButton $dim>
            <InsertIcon />
            <BigLabel>삽입</BigLabel>
            <Caret />
          </BigButton>
          <BigButton $dim>
            <DeleteIcon />
            <BigLabel>삭제</BigLabel>
            <Caret />
          </BigButton>
          <BigButton>
            <FormatIcon />
            <BigLabel>서식</BigLabel>
            <Caret />
          </BigButton>
        </RibbonGroup>
        <RibbonGroup width={166} title="편집">
          <Stack $small $indent={3}>
            <LabelButton>
              <IconSlot>
                <SumIcon />
              </IconSlot>
              자동 합계
              <Caret />
            </LabelButton>
            <LabelButton $dim>
              <IconSlot>
                <DownIcon />
              </IconSlot>
              채우기
              <Caret />
            </LabelButton>
            <LabelButton>
              <IconSlot>
                <EraserIcon />
              </IconSlot>
              지우기
              <Caret />
            </LabelButton>
          </Stack>
        </RibbonGroup>
      </Ribbon>
      <FormulaBar>
        <NameBox>
          <input aria-label="이름 상자" defaultValue="F16" />
          <Caret />
        </NameBox>
        <Grip>
          <GripIcon />
        </Grip>
        <FormulaActions>
          <button aria-label="취소">
            <CancelIcon />
          </button>
          <button aria-label="입력">
            <CheckIcon />
          </button>
          <button aria-label="함수 삽입">
            <FunctionMark>fx</FunctionMark>
          </button>
        </FormulaActions>
        <FormulaInput
          aria-label="수식 입력줄"
          value={formula}
          onChange={(e) => setFormula(e.target.value)}
        />
      </FormulaBar>
      <Sheet>
        <Grid>
          <colgroup>
            {columnWidths.map((width, idx) => (
              <Col key={idx} $width={width} />
            ))}
          </colgroup>
          <thead>
            <tr>
              <ColHead>
                <CornerIcon />
              </ColHead>
              {columns.map((name) => (
                <ColHead key={name} scope="col" $selected={name === "F"}>
                  {name}
                </ColHead>
              ))}
            </tr>
          </thead>
          <tbody>
            {rows.map((row) => (
              <Row key={row.n}>
                <RowHead scope="row" $selected={row.n === ACTIVE}>
                  {row.n}
                </RowHead>
                <Cell>{row.id}</Cell>
                <Cell>{row.date}</Cell>
                <NameCell>
                  <Split
                    columns={row.n === 21 ? "40px 23px 1fr" : "35px 28px 1fr"}
                    parts={row.name}
                  />
                </NameCell>
                <Cell>5</Cell>
                <Cell $edge={row.n === ACTIVE}>
                  <UrlLines row={row} />
                </Cell>
                {notes[row.n] && (
                  <NoteCell $edge={row.n === ACTIVE - 1}>
                    <NoteBody>
                      {notes[row.n].map((line) => (
                        <NoteLine key={line[0]} line={line} />
                      ))}
                    </NoteBody>
                  </NoteCell>
                )}
                {row.n === ACTIVE && (
                  <ActiveCell rowSpan={7}>
                    {review.map((line, idx) => (
                      <NoteLine key={idx} line={line} />
                    ))}
                  </ActiveCell>
                )}
              </Row>
            ))}
            <Row>
              <RowHead scope="row">22</RowHead>
              <Cell />
              <Cell />
              <Cell />
              <Cell />
              <Cell>
                <UrlBody>
                  <WholeLine>
                    https://thumbnail7.coupangcdn.com/thumbnails/local/q-
                  </WholeLine>
                  <WholeLine />
                  <WholeLine />
                  <WholeLine />
                </UrlBody>
              </Cell>
            </Row>
          </tbody>
        </Grid>
        <NameCover />
        <UrlCover />
        <NoteCover />
      </Sheet>
    </Page>
  );
};

export default App;
